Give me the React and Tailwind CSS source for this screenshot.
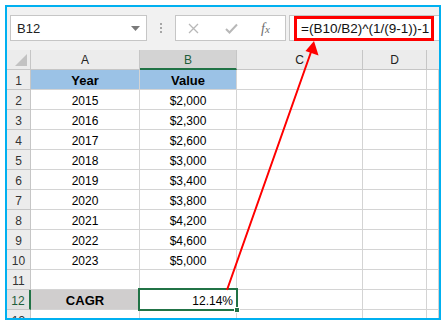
import React from "react";

const rows = [
  ["2015", "$2,000"],
  ["2016", "$2,300"],
  ["2017", "$2,600"],
  ["2018", "$3,000"],
  ["2019", "$3,400"],
  ["2020", "$3,800"],
  ["2021", "$4,200"],
  ["2022", "$4,600"],
  ["2023", "$5,000"],
];

const cols = "grid grid-cols-[24px_109px_97px_126px_64px_1fr]";
const cell = "h-[20px] border-r border-b border-[#d4d4d4] bg-white";
const rowHead =
  "h-[20px] border-r border-b border-[#c6c6c6] bg-[#ececec] flex items-center justify-center text-[12px] text-[#333] pt-[2px]";

function DataRow({ n, a, b, aBold, bBold, fillA, fillB }) {
  return (
    <div className={cols}>
      <div className={rowHead}>{n}</div>
      <div
        className={`h-[20px] border-r border-b border-[#d4d4d4] flex items-center justify-center pt-[2px] ${
          fillA || "bg-white"
        } ${aBold ? "font-bold text-[13px]" : "text-[12px]"}`}
      >
        {a}
      </div>
      <div
        className={`h-[20px] border-r border-b border-[#d4d4d4] flex items-center justify-center pt-[2px] ${
          fillB || "bg-white"
        } ${bBold ? "font-bold text-[13px]" : "text-[12px]"}`}
      >
        {b}
      </div>
      <div className={cell}></div>
      <div className={cell}></div>
      <div className={cell}></div>
    </div>
  );
}

export default function App() {
  return (
    <div
      className="w-[448px] h-[326px] bg-white relative overflow-hidden"
      style={{ fontFamily: '"Liberation Sans", Arial, sans-serif' }}
    >
      <div className="ml-[5px] mt-[5px] w-[436px] h-[315px] border-2 border-[#00b0f0] bg-[#f1f1f1] overflow-hidden flex flex-col">
        {/* Formula bar */}
        <div className="h-[43px] flex items-start pt-[8px] shrink-0">
          <div className="ml-[3px] w-[137px] h-[26px] bg-white border border-[#c6c6c6] flex items-center justify-between pl-[6px] pr-[6px]">
            <span className="text-[13px] text-[#222] pt-[1px]">B12</span>
            <svg width="9" height="5" viewBox="0 0 9 5">
              <path d="M0 0 L9 0 L4.5 5 Z" fill="#7a7a7a" />
            </svg>
          </div>
          <div className="ml-[13px] mt-[8px] flex flex-col gap-[2px]">
            <div className="w-[2px] h-[2px] bg-[#a6a6a6]"></div>
            <div className="w-[2px] h-[2px] bg-[#a6a6a6]"></div>
            <div className="w-[2px] h-[2px] bg-[#a6a6a6]"></div>
          </div>
          <div className="ml-[13px] w-[111px] h-[26px] bg-white border border-[#c6c6c6] flex items-center">
            <svg className="ml-[12px]" width="11" height="11" viewBox="0 0 11 11">
              <path d="M1 1 L10 10 M10 1 L1 10" stroke="#b8b8b8" strokeWidth="1.3" />
            </svg>
            <svg className="ml-[26px]" width="13" height="11" viewBox="0 0 13 11">
              <path d="M1 6 L4.5 9.5 L12 1.5" stroke="#b8b8b8" strokeWidth="2" fill="none" />
            </svg>
            <span
              className="ml-[23px] text-[14px] italic text-[#6e6e6e]"
              style={{ fontFamily: '"Liberation Serif", "Times New Roman", serif' }}
            >
              f<span className="text-[11px]">x</span>
            </span>
          </div>
          <div className="ml-[3px] flex-1 h-[26px] bg-white border-l border-t border-b border-[#c6c6c6] pl-[4px]">
            <div className="w-[140px] h-[25px] border-[3px] border-[#ff0000] flex items-center pl-[4px] pt-[2px]">
              <span className="text-[13.5px] text-[#111] whitespace-nowrap">=(B10/B2)^(1/(9-1))-1</span>
            </div>
          </div>
        </div>

        {/* Column headers */}
        <div className={cols}>
          <div className="h-[20px] border-r border-b border-[#c6c6c6] bg-[#ececec] relative">
            <svg className="absolute right-[3px] bottom-[3px]" width="12" height="12" viewBox="0 0 12 12">
              <path d="M12 0 L12 12 L0 12 Z" fill="#c2c2c2" />
            </svg>
          </div>
          <div className="h-[20px] border-r border-b border-[#c6c6c6] bg-[#ececec] flex items-center justify-center text-[12px] text-[#222] pt-[1px]">
            A
          </div>
          <div className="h-[20px] border-r border-[#c6c6c6] border-b-2 border-b-[#217346] bg-[#d3d3d3] flex items-center justify-center text-[12px] text-[#1d5e3a] pt-[2px]">
            B
          </div>
          <div className="h-[20px] border-r border-b border-[#c6c6c6] bg-[#ececec] flex items-center justify-center text-[12px] text-[#222] pt-[1px]">
            C
          </div>
          <div className="h-[20px] border-r border-b border-[#c6c6c6] bg-[#ececec] flex items-center justify-center text-[12px] text-[#222] pt-[1px]">
            D
          </div>
          <div className="h-[20px] border-b border-[#c6c6c6] bg-[#ececec]"></div>
        </div>

        <DataRow n="1" a="Year" b="Value" aBold bBold fillA="bg-[#9bc2e6]" fillB="bg-[#9bc2e6]" />
        {rows.map((r, i) => (
          <DataRow key={i} n={String(i + 2)} a={r[0]} b={r[1]} />
        ))}
        <DataRow n="11" a="" b="" />

        {/* Row 12 */}
        <div className={cols}>
          <div className="h-[20px] border-r-2 border-r-[#217346] border-b border-[#c6c6c6] bg-[#e1e1e1] flex items-center justify-center text-[12px] text-[#1d5e3a] pt-[2px]">
            12
          </div>
          <div className="h-[20px] border-r border-b border-[#d4d4d4] bg-[#d0cece] flex items-center justify-center font-bold text-[13px] pt-[2px]">
            CAGR
          </div>
          <div className="h-[20px] border-r border-b border-[#d4d4d4] bg-white flex items-center justify-end pr-[3px] text-[12px] pt-[2px] relative">
            12.14%
            <div className="absolute left-[-2px] top-[-2px] right-[-2px] bottom-[-2px] border-2 border-[#217346]"></div>
            <div className="absolute right-[-4px] bottom-[-4px] w-[6px] h-[6px] bg-[#217346] border border-white"></div>
          </div>
          <div className={cell}></div>
          <div className={cell}></div>
          <div className={cell}></div>
        </div>
        <DataRow n="13" a="" b="" />
      </div>

      {/* Red arrow */}
      <svg className="absolute left-0 top-0 pointer-events-none" width="448" height="326" viewBox="0 0 448 326">
        <line x1="227" y1="290" x2="311" y2="52" stroke="#ff0000" strokeWidth="2" />
        <path d="M314 41 L318.5 55.5 L305.5 51 Z" fill="#ff0000" />
      </svg>
    </div>
  );
}
